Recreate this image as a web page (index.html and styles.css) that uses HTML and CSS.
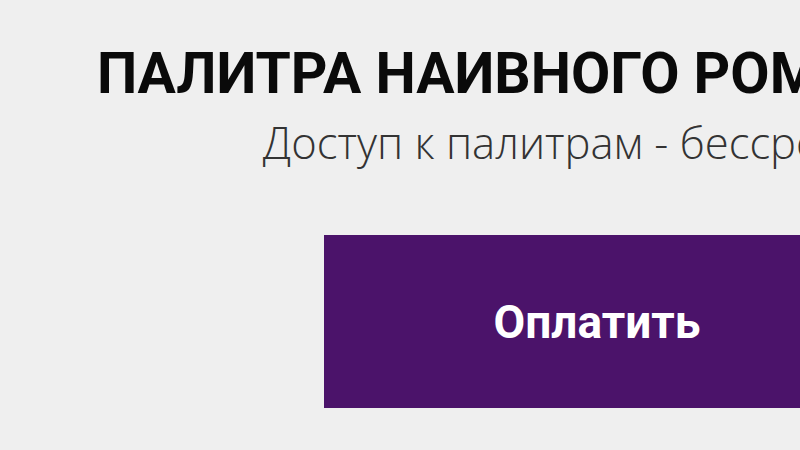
FILE: index.html
```html
<!DOCTYPE html>
<html lang="ru">
<head>
  <meta charset="UTF-8">
  <title>Палитра наивного романтизма</title>
  <meta name="viewport" content="width=device-width, initial-scale=1.0">
  <link rel="stylesheet" href="styles.css">
</head>
<body>
  <div class="page">
    <div class="offer">
      <h1 class="offer-title">ПАЛИТРА НАИВНОГО РОМАНТИЗМА</h1>
      <p class="offer-sub">Доступ к палитрам - бессрочный</p>
      <button class="pay-btn">Оплатить</button>
    </div>
  </div>
</body>
</html>
```

FILE: styles.css
```css
html, body {
  margin: 0;
  padding: 0;
  background: #efefef;
  overflow: hidden;
}
.page {
  width: 1194px;
}
.offer {
  display: flex;
  flex-direction: column;
  align-items: center;
  text-align: center;
  padding-top: 40px;
}
.offer-title {
  margin: 0;
  font-family: Roboto, "Liberation Sans", sans-serif;
  font-weight: 700;
  font-size: 57px;
  line-height: 68px;
  color: #0a0a0a;
  white-space: nowrap;
}
.offer-sub {
  margin: 5px 0 0;
  font-family: "Open Sans", sans-serif;
  font-weight: 300;
  font-size: 43.6px;
  line-height: 58px;
  color: #333;
  white-space: nowrap;
}
.pay-btn {
  margin-top: 64px;
  width: 546px;
  height: 173px;
  border: none;
  background: #4b136a;
  color: #fff;
  font-family: Roboto, "Liberation Sans", sans-serif;
  font-weight: 700;
  font-size: 46px;
  cursor: pointer;
}
```
